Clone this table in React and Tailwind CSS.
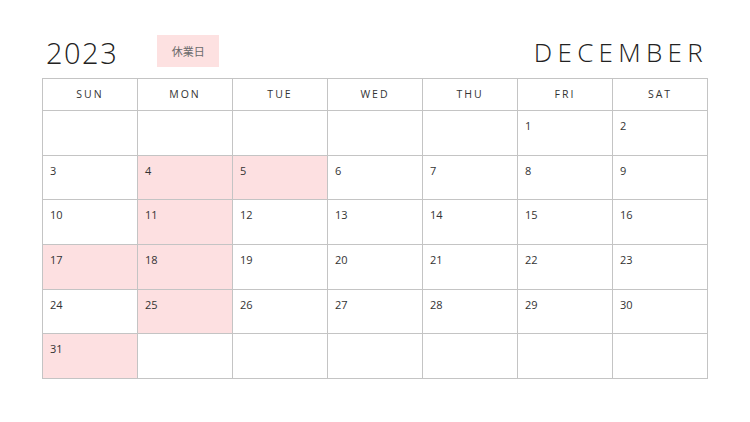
import React from "react";

const days = ["SUN", "MON", "TUE", "WED", "THU", "FRI", "SAT"];
const pink = new Set([4, 5, 11, 17, 18, 25, 31]);
const rowHeights = ["h-[45px]", "h-[44px]", "h-[45px]", "h-[45px]", "h-[44px]", "h-[45px]"];

export default function App() {
  const cells = [];
  for (let i = 0; i < 42; i++) {
    const d = i - 4;
    cells.push(d >= 1 && d <= 31 ? d : null);
  }
  const rows = [];
  for (let r = 0; r < 6; r++) rows.push(cells.slice(r * 7, r * 7 + 7));

  return (
    <div className="w-[750px] h-[422px] bg-white relative overflow-hidden" style={{ fontFamily: '"Open Sans", "Noto Sans CJK JP", sans-serif' }}>
      <div className="flex items-start pl-[46px] pr-[42px] pt-[35px] h-[78px]">
        <div className="text-[29px] leading-none font-light text-[#222] tracking-[1.5px] mt-[3px]">2023</div>
        <div className="ml-[39px] w-[62px] h-[32px] bg-[#fde1e1] flex items-center justify-center text-[11px] text-[#6a6a6a]" style={{ fontFamily: '"Noto Sans CJK JP", sans-serif' }}>休業日</div>
        <div className="ml-auto text-[26px] leading-none font-light text-[#222] tracking-[5.3px] mt-[4px]">DECEMBER</div>
      </div>
      <div className="ml-[42px] w-[666px] border-l border-t border-[#c4c4c4]">
        <div className="flex h-[32px]">
          {days.map((d) => (
            <div key={d} className="w-[95px] border-r border-b border-[#c4c4c4] flex items-center justify-center text-[10.5px] tracking-[2px] text-[#333]">
              {d}
            </div>
          ))}
        </div>
        {rows.map((row, ri) => (
          <div key={ri} className={`flex ${rowHeights[ri]}`}>
            {row.map((d, ci) => (
              <div
                key={ci}
                className={`w-[95px] border-r border-b border-[#c4c4c4] pl-[7px] pt-[8px] text-[11px] text-[#333] leading-[14px] ${d && pink.has(d) ? "bg-[#fde0e1]" : "bg-white"}`}
              >
                {d}
              </div>
            ))}
          </div>
        ))}
      </div>
    </div>
  );
}
